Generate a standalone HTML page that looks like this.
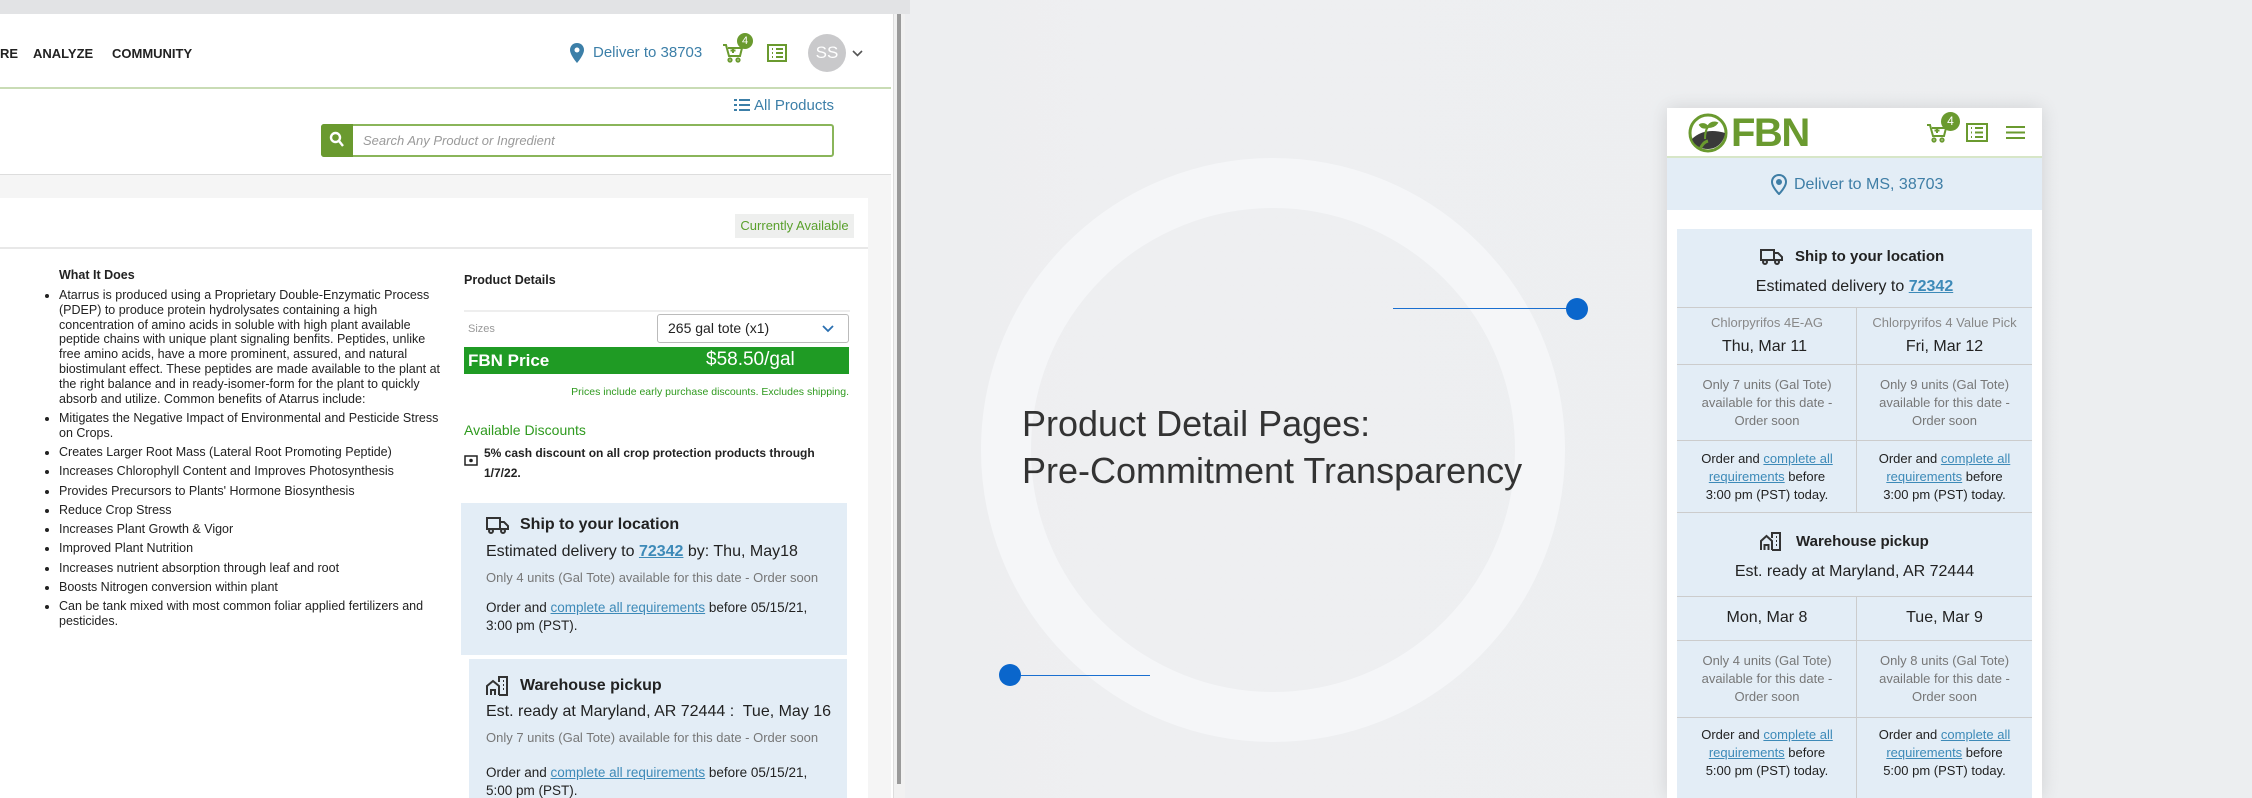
<!DOCTYPE html>
<html><head><meta charset="utf-8"><style>
*{margin:0;padding:0;box-sizing:border-box}
html,body{width:2252px;height:798px;overflow:hidden}
body{position:relative;font-family:"Liberation Sans",Arial,sans-serif;background:linear-gradient(90deg,#e8e9eb 0%,#eeeff1 50%,#eceef0 100%);color:#222}
.a{position:absolute;white-space:nowrap}
.lnk{color:#3d8ab8;text-decoration:underline}
</style></head><body>
<div class="a" style="left:981px;top:158px;width:584px;height:584px;border-radius:50%;border:50px solid #f5f6f8"></div>
<div class="a" style="left:1022px;top:400px;font-size:36px;color:#333;line-height:47px">Product Detail Pages:<br>Pre-Commitment Transparency</div>
<div class="a" style="left:1393px;top:308px;width:180px;height:1px;background:#1a6fd0"></div>
<div class="a" style="left:1566px;top:298px;width:22px;height:22px;border-radius:50%;background:#0a66cc"></div>
<div class="a" style="left:1010px;top:675px;width:140px;height:1px;background:#1a6fd0"></div>
<div class="a" style="left:999px;top:664px;width:22px;height:22px;border-radius:50%;background:#0a66cc"></div>

<div class="a" style="left:0;top:0;width:910px;height:14px;background:#e2e3e5"></div>
<div class="a" style="left:0;top:14px;width:893px;height:784px;background:#fff"></div>
<div class="a" style="left:893px;top:14px;width:12px;height:784px;background:#f1f1f1;border-left:1px solid #ddd"></div>
<div class="a" style="left:897px;top:14px;width:4px;height:770px;background:#9a9a9a"></div>
<div class="a" style="left:0;top:46px;font-size:13px;font-weight:bold;color:#222">RE</div>
<div class="a" style="left:33px;top:46px;font-size:13px;font-weight:bold;color:#222">ANALYZE</div>
<div class="a" style="left:112px;top:46px;font-size:13px;font-weight:bold;color:#222">COMMUNITY</div>
<svg class="a" style="left:570px;top:43px" width="14" height="20" viewBox="0 0 14 20"><path d="M7 0C3 0 0 3 0 7c0 5 7 13 7 13s7-8 7-13C14 3 11 0 7 0z" fill="#3c7fa8"/><circle cx="7" cy="7" r="2.5" fill="#fff"/></svg>
<div class="a" style="left:593px;top:44px;font-size:15px;color:#3c7fa8">Deliver to 38703</div>
<svg class="a" style="left:722px;top:42px" width="22" height="22" viewBox="0 0 22 22" fill="none" stroke="#6a9a2f" stroke-width="2"><path d="M1 3h3l3 11h11l2-8H6"/><circle cx="8" cy="18" r="1.6"/><circle cx="16" cy="18" r="1.6"/><path d="M11 6v5M8.5 8.5h5"/></svg>
<div class="a" style="left:737px;top:33px;width:16px;height:16px;border-radius:50%;background:#6a9a2f;color:#fff;font-size:11px;text-align:center;line-height:16px">4</div>
<svg class="a" style="left:767px;top:44px" width="20" height="18" viewBox="0 0 20 18" fill="none" stroke="#6a9a2f" stroke-width="2"><rect x="1" y="1" width="18" height="16"/><path d="M5 5h1M9 5h7M5 9h1M9 9h7M5 13h1M9 13h7"/></svg>
<div class="a" style="left:808px;top:34px;width:38px;height:38px;border-radius:50%;background:#c9c9cb;color:#fff;font-size:17px;text-align:center;line-height:38px">SS</div>
<svg class="a" style="left:852px;top:50px" width="11" height="7" viewBox="0 0 11 7"><path d="M1 1l4.5 4.5L10 1" stroke="#555" stroke-width="1.6" fill="none"/></svg>
<div class="a" style="left:0;top:87px;width:891px;height:2px;background:#c9dcb5"></div>
<svg class="a" style="left:734px;top:98px" width="16" height="14" viewBox="0 0 16 14" fill="#3c7fa8"><rect x="0" y="1" width="3" height="2"/><rect x="5" y="1" width="11" height="2"/><rect x="0" y="6" width="3" height="2"/><rect x="5" y="6" width="11" height="2"/><rect x="0" y="11" width="3" height="2"/><rect x="5" y="11" width="11" height="2"/></svg>
<div class="a" style="left:754px;top:97px;font-size:15px;color:#3c7fa8">All Products</div>
<div class="a" style="left:321px;top:124px;width:513px;height:33px;border:2px solid #8ab55a;border-radius:3px;background:#fff"></div>
<div class="a" style="left:321px;top:124px;width:32px;height:33px;background:#6a9a2f;border-radius:3px 0 0 3px"></div>
<svg class="a" style="left:329px;top:131px" width="16" height="18" viewBox="0 0 16 18" fill="none" stroke="#fff" stroke-width="2.4"><circle cx="6.5" cy="6.5" r="4.5"/><path d="M10 10l4 5"/></svg>
<div class="a" style="left:363px;top:133px;font-size:13px;font-style:italic;color:#9a9a9a">Search Any Product or Ingredient</div>
<div class="a" style="left:0;top:174px;width:891px;height:624px;background:#f5f5f5;border-top:1px solid #ddd"></div>
<div class="a" style="left:0;top:198px;width:868px;height:600px;background:#fff"></div>
<div class="a" style="left:0;top:247px;width:868px;height:2px;background:#e8e8e8"></div>
<div class="a" style="left:735px;top:214px;width:119px;height:24px;background:#eeefee;color:#5aa02c;font-size:13px;text-align:center;line-height:24px">Currently Available</div>
<div class="a" style="left:59px;top:268px;font-size:12.5px;font-weight:bold;color:#222">What It Does</div>
<div class="a" style="left:43px;top:288px;width:399px;white-space:normal;font-size:12.5px;line-height:14.8px;color:#222">
<ul style="padding-left:16px">
<li style="margin-bottom:4.5px">Atarrus is produced using a Proprietary Double-Enzymatic Process (PDEP) to produce protein hydrolysates containing a high concentration of amino acids in soluble with high plant available peptide chains with unique plant signaling benfits. Peptides, unlike free amino acids, have a more prominent, assured, and natural biostimulant effect. These peptides are made available to the plant at the right balance and in ready-isomer-form for the plant to quickly absorb and utilize. Common benefits of Atarrus include:</li>
<li style="margin-bottom:4.5px">Mitigates the Negative Impact of Environmental and Pesticide Stress on Crops.</li>
<li style="margin-bottom:4.5px">Creates Larger Root Mass (Lateral Root Promoting Peptide)</li>
<li style="margin-bottom:4.5px">Increases Chlorophyll Content and Improves Photosynthesis</li>
<li style="margin-bottom:4.5px">Provides Precursors to Plants' Hormone Biosynthesis</li>
<li style="margin-bottom:4.5px">Reduce Crop Stress</li>
<li style="margin-bottom:4.5px">Increases Plant Growth &amp; Vigor</li>
<li style="margin-bottom:4.5px">Improved Plant Nutrition</li>
<li style="margin-bottom:4.5px">Increases nutrient absorption through leaf and root</li>
<li style="margin-bottom:4.5px">Boosts Nitrogen conversion within plant</li>
<li style="margin-bottom:4.5px">Can be tank mixed with most common foliar applied fertilizers and pesticides.</li>
</ul></div>
<div class="a" style="left:464px;top:273px;font-size:12.5px;font-weight:bold;color:#222">Product Details</div>
<div class="a" style="left:464px;top:310px;width:386px;height:2px;background:#eee"></div>
<div class="a" style="left:468px;top:323px;font-size:11px;color:#999">Sizes</div>
<div class="a" style="left:657px;top:314px;width:192px;height:29px;border:1px solid #bbb;border-radius:3px;font-size:14px;line-height:27px;padding-left:10px;color:#222">265 gal tote (x1)</div>
<svg class="a" style="left:822px;top:325px" width="12" height="8" viewBox="0 0 12 8"><path d="M1 1l5 5 5-5" stroke="#2a6fb0" stroke-width="1.8" fill="none"/></svg>
<div class="a" style="left:464px;top:347px;width:385px;height:27px;background:#1f9b24"></div>
<div class="a" style="left:468px;top:351px;font-size:17px;font-weight:bold;color:#fff">FBN Price</div>
<div class="a" style="left:706px;top:349px;font-size:19px;color:#fff">$58.50/gal</div>
<div class="a" style="left:464px;top:386px;width:385px;text-align:right;font-size:10.5px;color:#2f9a1f">Prices include early purchase discounts. Excludes shipping.</div>
<div class="a" style="left:464px;top:422px;font-size:14px;color:#2f9a1f">Available Discounts</div>
<svg class="a" style="left:464px;top:455px" width="14" height="11" viewBox="0 0 14 11"><rect x="1" y="1" width="12" height="9" fill="none" stroke="#222" stroke-width="1.5"/><circle cx="7" cy="5.5" r="1.8" fill="#222"/></svg>
<div class="a" style="left:484px;top:444px;font-size:12px;font-weight:bold;color:#222;line-height:19.5px">5% cash discount on all crop protection products through<br>1/7/22.</div>
<div class="a" style="left:461px;top:503px;width:386px;height:152px;background:#e3edf6"></div>
<div class="a" style="left:469px;top:659px;width:378px;height:139px;background:#e3edf6"></div>
<svg class="a" style="left:486px;top:517px" width="23" height="17" viewBox="0 0 23 17" fill="none" stroke="#333" stroke-width="2"><path d="M1 1h13v11H1zM14 5h4l4 4v3h-8"/><circle cx="5" cy="14" r="2" fill="#e3edf6"/><circle cx="17" cy="14" r="2" fill="#e3edf6"/></svg>
<div class="a" style="left:520px;top:516px;font-size:16px;font-weight:bold;color:#222">Ship to your location</div>
<div class="a" style="left:486px;top:543px;font-size:16px;color:#222">Estimated delivery to <span class="lnk" style="font-weight:bold">72342</span> by: Thu, May18</div>
<div class="a" style="left:486px;top:570px;font-size:13px;color:#777">Only 4 units (Gal Tote) available for this date - Order soon</div>
<div class="a" style="left:486px;top:599px;font-size:13.5px;color:#222;line-height:18px">Order and <span class="lnk">complete all requirements</span> before 05/15/21,<br>3:00 pm (PST).</div>
<svg class="a" style="left:486px;top:676px" width="22" height="20" viewBox="0 0 22 20" fill="none" stroke="#333" stroke-width="2"><path d="M1 19V10l6-5 6 5v9M5 19v-5h4v5M13 19h8V1H13v5M17 5h1M17 9h1M17 13h1"/></svg>
<div class="a" style="left:520px;top:677px;font-size:16px;font-weight:bold;color:#222">Warehouse pickup</div>
<div class="a" style="left:486px;top:703px;font-size:16px;color:#222">Est. ready at Maryland, AR 72444 :&nbsp; Tue, May 16</div>
<div class="a" style="left:486px;top:730px;font-size:13px;color:#777">Only 7 units (Gal Tote) available for this date - Order soon</div>
<div class="a" style="left:486px;top:764px;font-size:13.5px;color:#222;line-height:18px">Order and <span class="lnk">complete all requirements</span> before 05/15/21,<br>5:00 pm (PST).</div>

<div class="a" style="left:1667px;top:108px;width:375px;height:690px;background:#fff;box-shadow:0 0 18px rgba(0,0,0,.12)"></div>
<div class="a" style="left:1667px;top:156px;width:375px;height:2px;background:#d7e6c8"></div>
<div class="a" style="left:1667px;top:158px;width:375px;height:52px;background:#e3edf6"></div>
<svg class="a" style="left:1688px;top:113px" width="40" height="40" viewBox="0 0 40 40"><circle cx="20" cy="20" r="18" fill="#fff" stroke="#6a9a2f" stroke-width="3"/><path d="M4 26c8-8 20-10 33-6-1 9-8 16-17 16C12 36 6 32 4 26z" fill="#3a3a3a"/><path d="M17 26c0-6 1-10 3-12M20 14c-3-4-7-3-8-2 2 3 5 3 8 2zM20 14c2-5 7-5 9-4-2 3-6 4-9 4z" stroke="#6a9a2f" stroke-width="2" fill="#6a9a2f"/><path d="M12 36c2-4 4-7 8-8" stroke="#6a9a2f" stroke-width="3" fill="none"/></svg>
<div class="a" style="left:1731px;top:111px;font-size:40px;font-weight:bold;color:#6a9a2f;letter-spacing:-1.5px">FBN</div>
<svg class="a" style="left:1926px;top:122px" width="22" height="22" viewBox="0 0 22 22" fill="none" stroke="#6a9a2f" stroke-width="2"><path d="M1 3h3l3 11h11l2-8H6"/><circle cx="8" cy="18" r="1.6"/><circle cx="16" cy="18" r="1.6"/><path d="M11 6v5M8.5 8.5h5"/></svg>
<div class="a" style="left:1941px;top:112px;width:19px;height:19px;border-radius:50%;background:#6a9a2f;color:#fff;font-size:12px;text-align:center;line-height:19px">4</div>
<svg class="a" style="left:1966px;top:123px" width="22" height="19" viewBox="0 0 22 19" fill="none" stroke="#6a9a2f" stroke-width="2"><rect x="1" y="1" width="20" height="17"/><path d="M5 5h1M9 5h8M5 9.5h1M9 9.5h8M5 14h1M9 14h8"/></svg>
<svg class="a" style="left:2006px;top:126px" width="19" height="13" viewBox="0 0 19 13" fill="#6a9a2f"><rect y="0" width="19" height="2"/><rect y="5.5" width="19" height="2"/><rect y="11" width="19" height="2"/></svg>
<svg class="a" style="left:1771px;top:174px" width="16" height="21" viewBox="0 0 16 21" fill="none" stroke="#3f7ea6" stroke-width="2"><path d="M8 1C4 1 1 4 1 8c0 5 7 12 7 12s7-7 7-12c0-4-3-7-7-7z"/><circle cx="8" cy="8" r="2" fill="#3f7ea6"/></svg>
<div class="a" style="left:1794px;top:176px;font-size:16px;color:#3f7ea6">Deliver to MS, 38703</div>
<div class="a" style="left:1677px;top:229px;width:355px;height:569px;background:#e3edf6"></div>
<svg class="a" style="left:1760px;top:249px" width="23" height="16" viewBox="0 0 23 16" fill="none" stroke="#333" stroke-width="2"><path d="M1 1h13v10H1zM14 4h4l4 4v3h-8"/><circle cx="5" cy="13" r="2" fill="#e3edf6"/><circle cx="17" cy="13" r="2" fill="#e3edf6"/></svg>
<div class="a" style="left:1795px;top:248px;font-size:15px;font-weight:bold;color:#222">Ship to your location</div>
<div class="a" style="left:1677px;top:278px;width:355px;text-align:center;font-size:16px;color:#222">Estimated delivery to <span class="lnk" style="font-weight:bold">72342</span></div>
<div class="a" style="left:1677px;top:307px;width:355px;height:1px;background:#ccc"></div>
<div class="a" style="left:1677px;top:364px;width:355px;height:1px;background:#ccc"></div>
<div class="a" style="left:1677px;top:440px;width:355px;height:1px;background:#ccc"></div>
<div class="a" style="left:1677px;top:512px;width:355px;height:1px;background:#ccc"></div>
<div class="a" style="left:1677px;top:596px;width:355px;height:1px;background:#ccc"></div>
<div class="a" style="left:1677px;top:640px;width:355px;height:1px;background:#ccc"></div>
<div class="a" style="left:1677px;top:717px;width:355px;height:1px;background:#ccc"></div>
<div class="a" style="left:1856px;top:307px;width:1px;height:205px;background:#ccc"></div>
<div class="a" style="left:1856px;top:596px;width:1px;height:202px;background:#ccc"></div>
<div class="a" style="left:1677px;top:315px;width:180px;text-align:center;font-size:13px;color:#888">Chlorpyrifos 4E-AG</div>
<div class="a" style="left:1857px;top:315px;width:175px;text-align:center;font-size:13px;color:#888">Chlorpyrifos 4 Value Pick</div>
<div class="a" style="left:1677px;top:338px;width:175px;text-align:center;font-size:16px;color:#222">Thu, Mar 11</div>
<div class="a" style="left:1857px;top:338px;width:175px;text-align:center;font-size:16px;color:#222">Fri, Mar 12</div>
<div class="a" style="left:1677px;top:376px;width:180px;text-align:center;font-size:13px;line-height:18px;color:#777;white-space:normal">Only 7 units (Gal Tote)<br>available for this date -<br>Order soon</div>
<div class="a" style="left:1857px;top:376px;width:175px;text-align:center;font-size:13px;line-height:18px;color:#777;white-space:normal">Only 9 units (Gal Tote)<br>available for this date -<br>Order soon</div>
<div class="a" style="left:1677px;top:450px;width:180px;text-align:center;font-size:13px;line-height:18px;color:#222">Order and <span class="lnk">complete all</span><br><span class="lnk">requirements</span> before<br>3:00 pm (PST) today.</div>
<div class="a" style="left:1857px;top:450px;width:175px;text-align:center;font-size:13px;line-height:18px;color:#222">Order and <span class="lnk">complete all</span><br><span class="lnk">requirements</span> before<br>3:00 pm (PST) today.</div>
<svg class="a" style="left:1760px;top:532px" width="21" height="19" viewBox="0 0 21 19" fill="none" stroke="#333" stroke-width="2"><path d="M1 18V9l5.5-5 5.5 5v9M4.5 18v-5h4v5M12 18h8V1h-8v5M16 5h1M16 9h1M16 13h1"/></svg>
<div class="a" style="left:1796px;top:533px;font-size:15px;font-weight:bold;color:#222">Warehouse pickup</div>
<div class="a" style="left:1677px;top:563px;width:355px;text-align:center;font-size:16px;color:#222">Est. ready at Maryland, AR 72444</div>
<div class="a" style="left:1677px;top:609px;width:180px;text-align:center;font-size:16px;color:#222">Mon, Mar 8</div>
<div class="a" style="left:1857px;top:609px;width:175px;text-align:center;font-size:16px;color:#222">Tue, Mar 9</div>
<div class="a" style="left:1677px;top:652px;width:180px;text-align:center;font-size:13px;line-height:18px;color:#777">Only 4 units (Gal Tote)<br>available for this date -<br>Order soon</div>
<div class="a" style="left:1857px;top:652px;width:175px;text-align:center;font-size:13px;line-height:18px;color:#777">Only 8 units (Gal Tote)<br>available for this date -<br>Order soon</div>
<div class="a" style="left:1677px;top:726px;width:180px;text-align:center;font-size:13px;line-height:18px;color:#222">Order and <span class="lnk">complete all</span><br><span class="lnk">requirements</span> before<br>5:00 pm (PST) today.</div>
<div class="a" style="left:1857px;top:726px;width:175px;text-align:center;font-size:13px;line-height:18px;color:#222">Order and <span class="lnk">complete all</span><br><span class="lnk">requirements</span> before<br>5:00 pm (PST) today.</div>
</body></html>
